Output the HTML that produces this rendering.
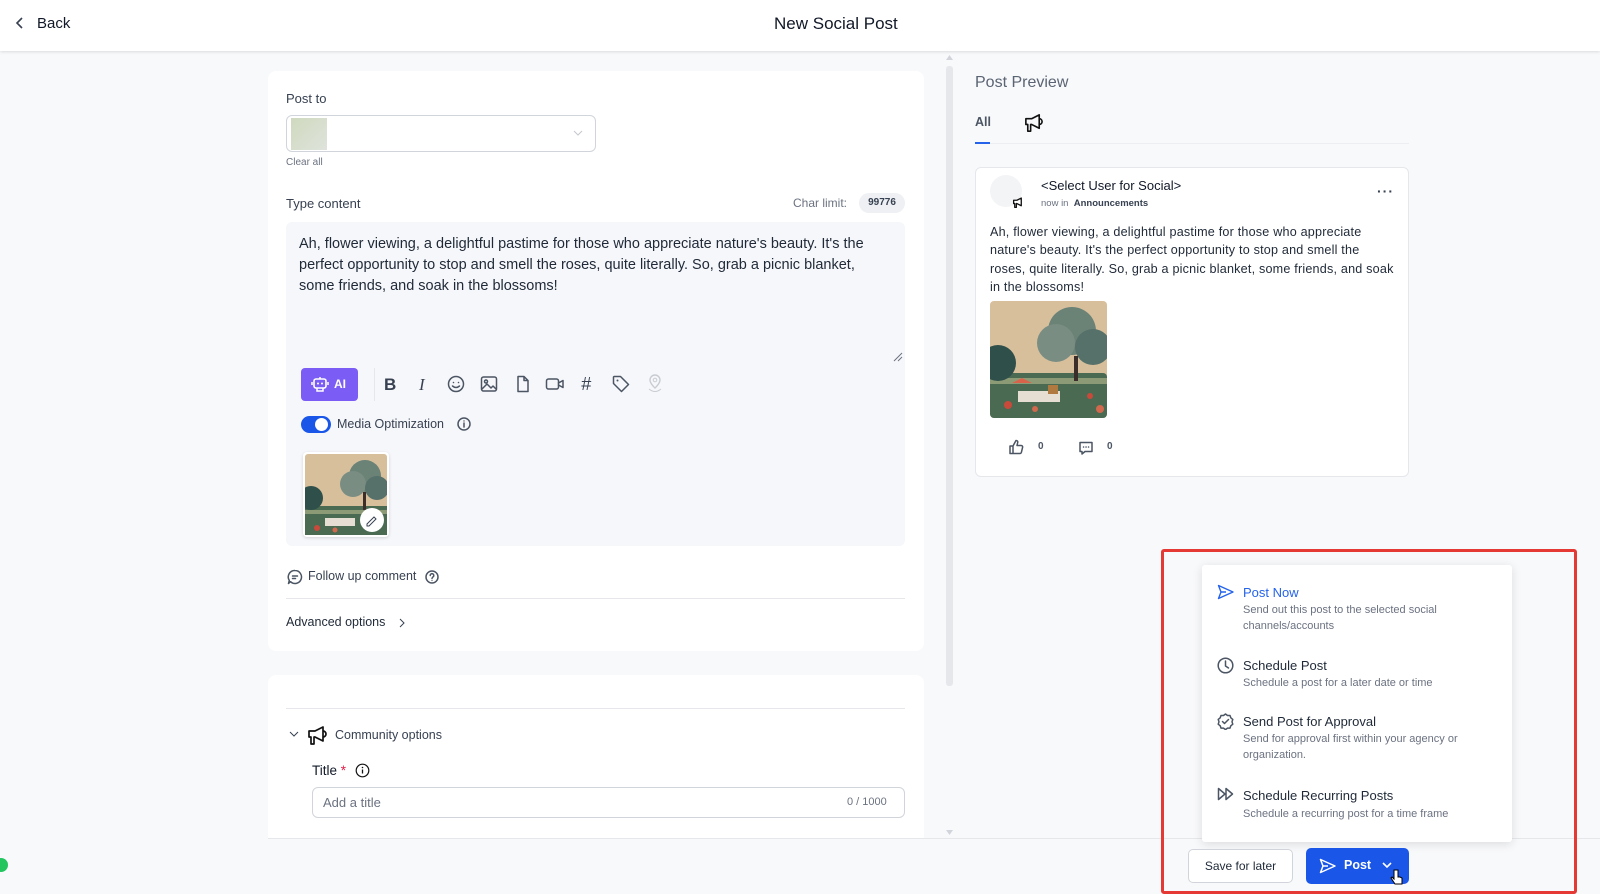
<!DOCTYPE html>
<html><head><meta charset="utf-8"><style>
*{box-sizing:border-box;margin:0;padding:0}
body{width:1600px;height:890px;overflow:hidden;background:#f8f9fb;font-family:"Liberation Sans",sans-serif;color:#1f2937;position:relative}
.a{position:absolute}
.hdr{left:0;top:0;width:1600px;height:51px;background:#fff;box-shadow:0 1px 3px rgba(0,0,0,.12)}
.card{background:#fff;border-radius:8px}
.lbl{font-size:13px;color:#374151}
.ic{stroke:#4b5563;fill:none;stroke-width:1.5;stroke-linecap:round;stroke-linejoin:round}
.menu div.t{font-size:13px;color:#1f2937}
.menu div.d{font-size:11px;color:#6b7280;line-height:16px}
</style></head><body>
<div class="a hdr"></div>
<svg class="a" style="left:14px;top:16px" width="12" height="14" viewBox="0 0 12 14"><path d="M8 2L3 7l5 5" stroke="#374151" stroke-width="1.6" fill="none"/></svg>
<div class="a" style="left:37px;top:15px;font-size:15px;color:#111827">Back</div>
<div class="a" style="left:774px;top:14px;font-size:17px;color:#111827">New Social Post</div>

<!-- card1 -->
<div class="a card" style="left:268px;top:71px;width:656px;height:580px"></div>
<div class="a lbl" style="left:286px;top:91px">Post to</div>
<div class="a" style="left:286px;top:115px;width:310px;height:37px;border:1px solid #d1d5db;border-radius:6px;background:#fff"></div>
<div class="a" style="left:291px;top:118px;width:36px;height:32px;background:linear-gradient(135deg,#cfd9be,#dfe3dc)"></div>
<svg class="a" style="left:573px;top:129px" width="10" height="8"><path d="M1 2l4 4 4-4" stroke="#c4c8cf" fill="none"/></svg>
<div class="a" style="left:286px;top:157px;font-size:10px;color:#6b7280">Clear all</div>
<div class="a lbl" style="left:286px;top:196px">Type content</div>
<div class="a" style="left:793px;top:196px;font-size:12px;color:#6b7280">Char limit:</div>
<div class="a" style="left:859px;top:193px;width:46px;height:20px;border-radius:10px;background:#eef0f3;font-size:10px;font-weight:bold;color:#374151;text-align:center;line-height:20px">99776</div>
<div class="a" style="left:286px;top:222px;width:619px;height:324px;background:#f6f7fa;border-radius:6px"></div>
<div class="a" style="left:299px;top:234px;width:595px;font-size:14.5px;line-height:21px;color:#1f2937">Ah, flower viewing, a delightful pastime for those who appreciate nature's beauty. It's the perfect opportunity to stop and smell the roses, quite literally. So, grab a picnic blanket, some friends, and soak in the blossoms!</div>
<svg class="a" style="left:893px;top:352px" width="10" height="10"><path d="M1 9L9 1M5 9l4-4" stroke="#6b7280"/></svg>
<div class="a" style="left:301px;top:368px;width:57px;height:33px;background:#7b5cf5;border-radius:4px;color:#fff;font-size:12px;font-weight:bold;line-height:33px;padding-left:33px">AI</div>
<svg class="a" style="left:311px;top:376px" width="18" height="17" viewBox="0 0 18 17"><rect x="3" y="3" width="12" height="9" rx="2" stroke="#fff" stroke-width="1.6" fill="none"/><circle cx="7" cy="7.5" r="1" fill="#fff"/><circle cx="11" cy="7.5" r="1" fill="#fff"/><path d="M9 1v2M1 6v3M17 6v3M6 12v3h6v-3" stroke="#fff" stroke-width="1.5" fill="none"/></svg>
<div class="a" style="left:374px;top:368px;width:1px;height:33px;background:#e5e7eb"></div>
<div class="a" style="left:384px;top:375px;font-size:17px;font-weight:bold;color:#374151">B</div>
<div class="a" style="left:419px;top:375px;font-size:17px;font-style:italic;font-family:'Liberation Serif',serif;color:#374151">I</div>
<svg class="a" style="left:447px;top:375px" width="18" height="18"><circle cx="9" cy="9" r="7.5" class="ic"/><circle cx="6.5" cy="7.5" r=".8" fill="#4b5563"/><circle cx="11.5" cy="7.5" r=".8" fill="#4b5563"/><path d="M5.5 11q3.5 3 7 0" class="ic"/></svg>
<svg class="a" style="left:480px;top:375px" width="18" height="18"><rect x="1.5" y="2" width="15" height="14" rx="2" class="ic"/><circle cx="6" cy="6.5" r="1.5" class="ic"/><path d="M2 14l5-5 4 4 2-2 3 3" class="ic"/></svg>
<svg class="a" style="left:514px;top:375px" width="18" height="18"><path d="M4 1.5h6l4 4v11H4z M10 1.5v4h4" class="ic"/></svg>
<svg class="a" style="left:545px;top:375px" width="20" height="18"><rect x="1.5" y="4" width="12" height="10" rx="2" class="ic"/><path d="M13.5 8l4.5-2.5v7L13.5 10" class="ic"/></svg>
<div class="a" style="left:581px;top:374px;font-size:18px;color:#374151;font-style:italic">#</div>
<svg class="a" style="left:612px;top:375px" width="18" height="18"><path d="M1.5 2v6.5l8 8 7-7-8-8H2z" class="ic"/><circle cx="5.5" cy="5.5" r="1" fill="#4b5563"/></svg>
<svg class="a" style="left:646px;top:374px" width="18" height="20"><path d="M9 14s5-4.5 5-8a5 5 0 00-10 0c0 3.5 5 8 5 8z" stroke="#c8ccd2" fill="none" stroke-width="1.4"/><circle cx="9" cy="6" r="1.8" stroke="#c8ccd2" fill="none"/><path d="M3 15q6 5 12 0" stroke="#c8ccd2" fill="none"/></svg>
<div class="a" style="left:301px;top:416px;width:30px;height:17px;border-radius:9px;background:#1a56e8"></div>
<div class="a" style="left:315px;top:418px;width:13px;height:13px;border-radius:50%;background:#fff"></div>
<div class="a" style="left:337px;top:417px;font-size:12.5px;color:#374151">Media Optimization</div>
<svg class="a" style="left:457px;top:417px" width="14" height="14"><circle cx="7" cy="7" r="6" class="ic" stroke-width="1.2"/><path d="M7 6v4" class="ic" stroke-width="1.2"/><circle cx="7" cy="4" r=".7" fill="#4b5563"/></svg>
<div class="a" style="left:303px;top:452px;width:86px;height:85px;border-radius:4px;background:#fff;box-shadow:0 1px 3px rgba(0,0,0,.15)"></div>
<svg class="a" style="left:305px;top:454px" width="82" height="81"><rect width="82" height="81" rx="3" fill="#d7bf9c"/><rect y="52" width="82" height="29" fill="#4a6a52"/><path d="M0 58h82" stroke="#8c9a76" stroke-width="4"/><circle cx="60" cy="22" r="16" fill="#6b8277"/><circle cx="48" cy="30" r="13" fill="#7a8d83"/><circle cx="72" cy="34" r="12" fill="#56706a"/><rect x="58" y="38" width="3" height="18" fill="#3b2e2a"/><circle cx="6" cy="44" r="12" fill="#2f4f4a"/><rect x="20" y="64" width="30" height="8" fill="#e6ded2"/><circle cx="12" cy="74" r="3" fill="#c94a3a"/><circle cx="30" cy="76" r="2.5" fill="#d0694d"/><circle cx="75" cy="62" r="2" fill="#c94a3a"/><circle cx="67" cy="66" r="12" fill="#fff"/><path d="M62 70l7-7 2 2-7 7h-2z" stroke="#374151" fill="none"/></svg>

<svg class="a" style="left:287px;top:569px" width="16" height="16"><path d="M8 1.5a6.5 6.5 0 11-4.5 11.2L1.5 14.5l.8-3A6.5 6.5 0 018 1.5z" class="ic" stroke-width="1.2"/><path d="M5.5 7h5M5.5 9.5h3" class="ic" stroke-width="1.2"/></svg>
<div class="a" style="left:308px;top:569px;font-size:12.5px;color:#374151">Follow up comment</div>
<svg class="a" style="left:425px;top:570px" width="14" height="14"><circle cx="7" cy="7" r="6" class="ic" stroke-width="1.1"/><path d="M5.2 5.5a1.8 1.8 0 113 1.3c-.8.5-1.2.8-1.2 1.7" class="ic" stroke-width="1.1"/><circle cx="7" cy="10.5" r=".6" fill="#4b5563"/></svg>
<div class="a" style="left:286px;top:598px;width:619px;height:1px;background:#e5e7eb"></div>
<div class="a" style="left:286px;top:615px;font-size:12.5px;color:#1f2937">Advanced options</div>
<svg class="a" style="left:398px;top:617px" width="8" height="12"><path d="M2 2l4 4-4 4" stroke="#374151" fill="none"/></svg>

<!-- card2 -->
<div class="a card" style="left:268px;top:675px;width:656px;height:170px"></div>
<div class="a" style="left:286px;top:708px;width:619px;height:1px;background:#e5e7eb"></div>
<svg class="a" style="left:288px;top:729px" width="12" height="10"><path d="M2 3l4 4 4-4" stroke="#374151" fill="none"/></svg>
<svg class="a" style="left:306px;top:725px" width="22" height="22" viewBox="0 0 22 22"><path d="M3 6h6l8-4v14l-8-4H8v7H5v-7H3z" stroke="#111" stroke-width="1.7" fill="none" stroke-linejoin="round"/><path d="M17 6a3 3 0 010 6" stroke="#111" stroke-width="1.7" fill="none"/></svg>
<div class="a" style="left:335px;top:728px;font-size:12.5px;color:#374151">Community options</div>
<div class="a" style="left:312px;top:763px;font-size:13.5px;color:#111827">Title <span style="color:#e11d48">*</span></div>
<svg class="a" style="left:355px;top:763px" width="15" height="15"><circle cx="7.5" cy="7.5" r="6.3" stroke="#111" fill="none" stroke-width="1.2"/><path d="M7.5 6.5v4" stroke="#111" stroke-width="1.3"/><circle cx="7.5" cy="4.5" r=".8" fill="#111"/></svg>
<div class="a" style="left:312px;top:787px;width:593px;height:31px;border:1px solid #d1d5db;border-radius:6px;background:#fff"></div>
<div class="a" style="left:323px;top:795px;font-size:13px;color:#6b7280">Add a title</div>
<div class="a" style="left:847px;top:796px;font-size:11px;color:#6b7280">0 / 1000</div>

<!-- bottom bar -->
<div class="a" style="left:268px;top:838px;width:1332px;height:52px;background:#f8f9fb;border-top:1px solid #e5e7eb"></div>
<div class="a" style="left:-6px;top:858px;width:14px;height:14px;border-radius:50%;background:#22c55e"></div>

<!-- scrollbar -->
<div class="a" style="left:946px;top:66px;width:7px;height:620px;background:#e5e7eb;border-radius:3px"></div>
<svg class="a" style="left:945px;top:54px" width="9" height="7"><path d="M1 6l3.5-5 3.5 5z" fill="#d1d5db"/></svg>
<svg class="a" style="left:945px;top:829px" width="9" height="7"><path d="M1 1l3.5 5 3.5-5z" fill="#d1d5db"/></svg>

<!-- preview -->
<div class="a" style="left:975px;top:74px;font-size:16px;color:#5b6472">Post Preview</div>
<div class="a" style="left:975px;top:115px;font-size:12.5px;color:#4b5563;font-weight:bold">All</div>
<div class="a" style="left:975px;top:142px;width:15px;height:2px;background:#2563eb"></div>
<svg class="a" style="left:1023px;top:113px" width="21" height="21" viewBox="0 0 22 22"><path d="M3 6h6l8-4v14l-8-4H8v7H5v-7H3z" stroke="#111" stroke-width="1.7" fill="none" stroke-linejoin="round"/><path d="M17 6a3 3 0 010 6" stroke="#111" stroke-width="1.7" fill="none"/></svg>
<div class="a" style="left:990px;top:143px;width:419px;height:1px;background:#eceef1"></div>
<div class="a" style="left:975px;top:167px;width:434px;height:310px;background:#fff;border:1px solid #e5e7eb;border-radius:6px"></div>
<div class="a" style="left:990px;top:175px;width:32px;height:32px;border-radius:50%;background:#f3f4f6"></div>
<svg class="a" style="left:1012px;top:197px" width="12" height="12" viewBox="0 0 22 22"><path d="M3 6h6l8-4v14l-8-4H8v7H5v-7H3z" stroke="#111" stroke-width="2.4" fill="#fff" stroke-linejoin="round"/></svg>
<div class="a" style="left:1041px;top:178px;font-size:13px;color:#111827">&lt;Select User for Social&gt;</div>
<div class="a" style="left:1041px;top:198px;font-size:9.5px;color:#6b7280">now in &nbsp;<b style="color:#374151">Announcements</b></div>
<div class="a" style="left:1377px;top:183px;font-size:14px;color:#374151;letter-spacing:1px;font-weight:bold">···</div>
<div class="a" style="left:990px;top:223px;white-space:nowrap;font-size:12.6px;letter-spacing:.2px;line-height:18.3px;color:#1f2937">Ah, flower viewing, a delightful pastime for those who appreciate<br>nature's beauty. It's the perfect opportunity to stop and smell the<br>roses, quite literally. So, grab a picnic blanket, some friends, and soak<br>in the blossoms!</div>
<svg class="a" style="left:990px;top:301px" width="117" height="117"><rect width="117" height="117" rx="4" fill="#d7bf9c"/><rect y="72" width="117" height="45" rx="4" fill="#4a6a52"/><path d="M0 80h117" stroke="#8c9a76" stroke-width="6"/><circle cx="82" cy="30" r="24" fill="#6b8277"/><circle cx="66" cy="42" r="19" fill="#7a8d83"/><circle cx="103" cy="46" r="18" fill="#56706a"/><rect x="84" y="55" width="4" height="25" fill="#3b2e2a"/><circle cx="8" cy="62" r="18" fill="#2f4f4a"/><path d="M22 82l10-5 10 5z" fill="#d9634a"/><rect x="28" y="90" width="42" height="11" fill="#e6ded2"/><rect x="58" y="84" width="10" height="9" fill="#b0793f"/><circle cx="18" cy="104" r="4" fill="#c94a3a"/><circle cx="45" cy="108" r="3" fill="#d0694d"/><circle cx="100" cy="95" r="3" fill="#c94a3a"/><circle cx="110" cy="108" r="4" fill="#d0694d"/></svg>
<svg class="a" style="left:1008px;top:439px" width="16" height="16"><path d="M5 7v7.5H2V7zM5 7l3-5.5c1.2 0 2 .8 1.7 2L9 6.5h4.2c1 0 1.6.9 1.4 1.8l-1.2 5c-.2.7-.8 1.2-1.5 1.2H5" class="ic" stroke-width="1.2"/></svg>
<div class="a" style="left:1038px;top:441px;font-size:10px;font-weight:bold;color:#4b5563">0</div>
<svg class="a" style="left:1078px;top:440px" width="16" height="16"><path d="M2 2.5h12v9H7l-3 2.5v-2.5H2z" class="ic" stroke-width="1.2"/><path d="M5.5 7h.1M8 7h.1M10.5 7h.1" class="ic" stroke-width="1.4"/></svg>
<div class="a" style="left:1107px;top:441px;font-size:10px;font-weight:bold;color:#4b5563">0</div>

<!-- red box + menu -->
<div class="a" style="left:1161px;top:549px;width:416px;height:345px;border:3px solid #e53935;border-radius:3px"></div>
<div class="a menu" style="left:1202px;top:565px;width:310px;height:277px;background:#fff;border-radius:3px;box-shadow:0 2px 10px rgba(0,0,0,.12)">
<svg class="a" style="left:15px;top:19px" width="18" height="16"><path d="M1.5 1.5L16 8 1.5 14.5 4 8z M4 8h5" stroke="#2563eb" stroke-width="1.4" fill="none" stroke-linejoin="round"/></svg>
<div class="a t" style="left:41px;top:20px;color:#2563eb">Post Now</div>
<div class="a d" style="left:41px;top:37px;width:230px">Send out this post to the selected social channels/accounts</div>
<svg class="a" style="left:15px;top:92px" width="17" height="17"><circle cx="8.5" cy="8.5" r="7.3" class="ic" stroke-width="1.3"/><path d="M8.5 4v5l3 2" class="ic" stroke-width="1.3"/></svg>
<div class="a t" style="left:41px;top:93px">Schedule Post</div>
<div class="a d" style="left:41px;top:110px">Schedule a post for a later date or time</div>
<svg class="a" style="left:15px;top:148px" width="17" height="17"><path d="M8.5 1l2 1.5 2.5 0 .8 2.3 2 1.6-.8 2.4.8 2.4-2 1.6-.8 2.3-2.5 0-2 1.5-2-1.5-2.5 0-.8-2.3-2-1.6.8-2.4-.8-2.4 2-1.6.8-2.3 2.5 0z" class="ic" stroke-width="1.1"/><path d="M5.5 8.5l2 2 4-4" class="ic" stroke-width="1.2"/></svg>
<div class="a t" style="left:41px;top:149px">Send Post for Approval</div>
<div class="a d" style="left:41px;top:166px;width:240px">Send for approval first within your agency or organization.</div>
<svg class="a" style="left:15px;top:222px" width="18" height="14"><path d="M1.5 1.5L8 7l-6.5 5.5zM9 1.5L15.5 7 9 12.5z" class="ic" stroke-width="1.3"/></svg>
<div class="a t" style="left:41px;top:223px">Schedule Recurring Posts</div>
<div class="a d" style="left:41px;top:241px">Schedule a recurring post for a time frame</div>
</div>
<div class="a" style="left:1188px;top:849px;width:105px;height:34px;background:#fff;border:1px solid #d1d5db;border-radius:5px;font-size:12px;color:#1f2937;text-align:center;line-height:32px">Save for later</div>
<div class="a" style="left:1306px;top:848px;width:103px;height:36px;background:#1a56e8;border-radius:5px"></div>
<svg class="a" style="left:1319px;top:858px" width="18" height="16"><path d="M1.5 1.5L16 8 1.5 14.5 4 8z M4 8h5" stroke="#fff" stroke-width="1.5" fill="none" stroke-linejoin="round"/></svg>
<div class="a" style="left:1344px;top:858px;font-size:12.5px;font-weight:bold;color:#fff">Post</div>
<svg class="a" style="left:1381px;top:861px" width="12" height="9"><path d="M2 2l4 4 4-4" stroke="#fff" stroke-width="1.6" fill="none"/></svg>
<svg class="a" style="left:1390px;top:868px" width="14" height="18"><path d="M4 2v9l-2-2-1 1 4 6h7v-6l-2-1-2 0V2z" fill="#fff" stroke="#000"/></svg>
</body></html>
